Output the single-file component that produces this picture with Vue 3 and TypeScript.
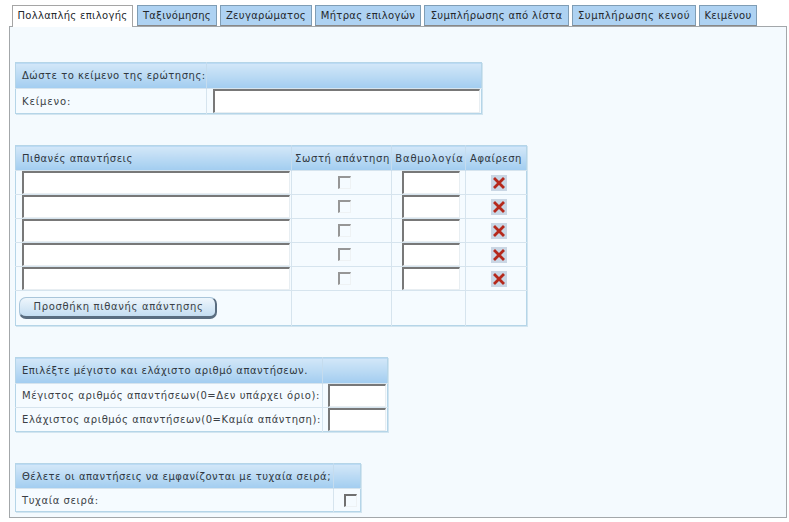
<script setup lang="ts">
const tabs: string[] = ['Πολλαπλής επιλογής', 'Ταξινόμησης', 'Ζευγαρώματος', 'Μήτρας επιλογών', 'Συμπλήρωσης από λίστα', 'Συμπλήρωσης κενού', 'Κειμένου']
const answers: number[] = [1, 2, 3, 4, 5]
</script>

<template>
  <div class="page">
    <div class="tabs">
      <div v-for="(t, i) in tabs" :key="t" class="tab" :class="{ active: i === 0 }">{{ t }}</div>
    </div>
    <div class="panel">
      <table class="t t1">
        <colgroup><col style="width:191px" /><col /></colgroup>
        <tr class="h"><th>Δώστε το κείμενο της ερώτησης:</th><th></th></tr>
        <tr class="r25"><td class="wide">Κείμενο:</td><td class="ic"><div class="inp w-full tall"></div></td></tr>
      </table>

      <table class="t t2">
        <colgroup><col style="width:276px" /><col style="width:100px" /><col style="width:74px" /><col /></colgroup>
        <tr class="h h24"><th>Πιθανές απαντήσεις</th><th class="c sp1">Σωστή απάντηση</th><th class="c sp2">Βαθμολογία</th><th class="c">Αφαίρεση</th></tr>
        <tr v-for="n in answers" :key="n" class="r24">
          <td class="ic"><div class="inp w-full"></div></td>
          <td class="c shift"><span class="chk"></span></td>
          <td class="ic pc"><div class="inp w-s"></div></td>
          <td class="c shift">
            <svg class="del" width="16" height="16" viewBox="0 0 16 16">
              <rect width="16" height="16" fill="#c9d6e4" />
              <path d="M4 4 L12 12 M12 4 L4 12" stroke="#b5291c" stroke-width="2.8" stroke-linecap="square" />
            </svg>
          </td>
        </tr>
        <tr class="rb">
          <td><button class="btn">Προσθήκη πιθανής απάντησης</button></td>
          <td></td><td></td><td></td>
        </tr>
      </table>

      <table class="t t3">
        <colgroup><col style="width:307px" /><col /></colgroup>
        <tr class="h"><th>Επιλέξτε μέγιστο και ελάχιστο αριθμό απαντήσεων.</th><th></th></tr>
        <tr class="r24"><td>Μέγιστος αριθμός απαντήσεων(0=Δεν υπάρχει όριο):</td><td class="ic pl5"><div class="inp w-full"></div></td></tr>
        <tr class="r24"><td>Ελάχιστος αριθμός απαντήσεων(0=Καμία απάντηση):</td><td class="ic pl5"><div class="inp w-full"></div></td></tr>
      </table>

      <table class="t t4">
        <colgroup><col style="width:318px" /><col /></colgroup>
        <tr class="h h24"><th>Θέλετε οι απαντήσεις να εμφανίζονται με τυχαία σειρά;</th><th></th></tr>
        <tr class="r22"><td>Τυχαία σειρά:</td><td class="c shift"><span class="chk dark"></span></td></tr>
      </table>
    </div>
  </div>
</template>

<style scoped>
.page {
  width: 789px;
  height: 522px;
  box-sizing: border-box;
  padding: 5px 2px 0 9px;
  font-family: "DejaVu Sans", Verdana, sans-serif;
  font-size: 10px;
  color: #3a3f45;
  background: #fff;
  overflow: hidden;
}
.tabs {
  display: flex;
  gap: 3px;
  padding-left: 3px;
  height: 21px;
  position: relative;
  z-index: 1;
}
.tab {
  box-sizing: border-box;
  height: 21px;
  text-align: center;
  line-height: 19px;
  background: #aed2f2;
  border: 1px solid #7f9db5;
  border-bottom: 1px solid #888;
  white-space: nowrap;
  letter-spacing: 0.32px;
  color: #24282c;
}
.tab:nth-child(1) { width: 121px; margin-right: 1px; }
.tab:nth-child(2) { width: 80px; }
.tab:nth-child(3) { width: 92px; }
.tab:nth-child(4) { width: 106px; }
.tab:nth-child(5) { width: 145px; letter-spacing: 0.4px; }
.tab:nth-child(6) { width: 124px; letter-spacing: 0.6px; }
.tab:nth-child(7) { width: 58px; }
.tab.active {
  background: #fff;
  border-color: #a5a5a5;
  border-bottom: none;
  height: 22px;
}
.panel {
  box-sizing: border-box;
  height: 492px;
  border: 1px solid #a3a7aa;
  background: #f4fafe;
  padding: 35px 0 0 5px;
}
.t {
  border-collapse: collapse;
  table-layout: fixed;
  margin-bottom: 31px;
  border: 1px solid #b5d5e8;
  box-shadow: 1px 1px 0 #d2e5f0;
  background: #f5fbff;
}
.t1 { width: 467px; }
.t2 { width: 512px; }
.t3 { width: 373px; }
.t4 { width: 346px; }
th, td {
  padding: 0 0 0 6px;
  font-weight: normal;
  text-align: left;
  border-left: 1px solid #d6e4ee;
  border-top: 1px solid #d6e4ee;
  white-space: nowrap;
  overflow: hidden;
  letter-spacing: 0.6px;
}
th {
  height: 25px;
  background: linear-gradient(#d3e7f8, #a2cdf0);
  border-top: none;
  border-left: 1px solid #c5dcee;
  color: #2f3740;
  letter-spacing: 0.5px;
}
.h24 th { height: 24px; }
th:first-child, td:first-child { border-left: none; }
.r25 td { height: 24px; }
.r24 td { height: 23px; }
.r22 td { height: 22px; }
.rb td { height: 34px; }
.c { text-align: center; padding: 0; }
th.sp1 { letter-spacing: 0.6px; padding-left: 2px; }
th.sp2 { letter-spacing: 0.85px; padding-left: 2px; }
.shift { padding-left: 6px; }
.wide { letter-spacing: 0.9px; }
.ic { padding: 0 0 0 6px; vertical-align: top; }
.pc { padding-left: 10px; }
.pl5 { padding-left: 5px; }
.inp {
  box-sizing: border-box;
  height: 23px;
  background: #fff;
  border-top: 2px solid #787878;
  border-left: 2px solid #787878;
  border-right: 1px solid #e8eef2;
  border-bottom: 1px solid #e8eef2;
}
.inp.tall { height: 24px; }
.w-full { width: calc(100% - 1px); }
.w-s { width: 58px; }
.chk {
  display: inline-block;
  box-sizing: border-box;
  width: 13px;
  height: 13px;
  vertical-align: middle;
  border-top: 2px solid #969696;
  border-left: 2px solid #969696;
  border-right: 1px solid #eef2f4;
  border-bottom: 1px solid #eef2f4;
}
.chk.dark { border-top-color: #707070; border-left-color: #707070; }
.del { display: block; margin: 0 auto; }
.btn {
  display: block;
  box-sizing: border-box;
  width: 198px;
  height: 22px;
  margin: 0 0 0 -3px;
  padding: 0 0 2px 2px;
  font: inherit;
  letter-spacing: 0.65px;
  color: #3a3f45;
  background: linear-gradient(#eef6fc, #c4ddf1);
  border: 1px solid #a9c5da;
  border-right: 2px solid #5a6d80;
  border-bottom: 3px solid #5a6d80;
  border-radius: 7px;
}
</style>
